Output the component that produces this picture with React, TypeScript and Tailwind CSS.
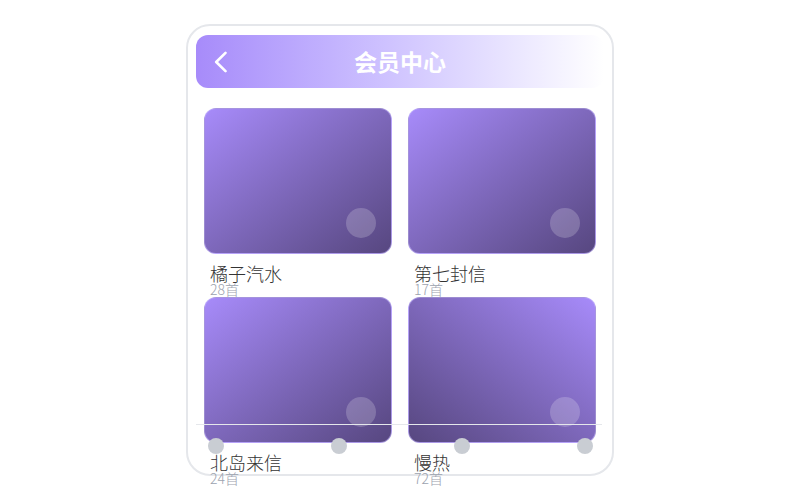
import { FC } from "react";

interface Album {
  title: string;
  count: number;
  flip?: boolean;
}

const albums: Album[] = [
  { title: "橘子汽水", count: 28 },
  { title: "第七封信", count: 17 },
  { title: "北岛来信", count: 24 },
  { title: "慢热", count: 72, flip: true },
];

const AlbumCard: FC<{ album: Album }> = ({ album }) => (
  <div className="h-[189px]">
    <div
      className={
        album.flip
          ? "relative h-[146px] rounded-xl border border-[#c4b5fd]/60 bg-linear-to-bl from-[#a78bfa] to-[#574780]"
          : "relative h-[146px] rounded-xl border border-[#c4b5fd]/60 bg-linear-to-br from-[#a78bfa] to-[#574780]"
      }
    >
      <div className="absolute right-[15px] bottom-[15px] size-[30px] rounded-full bg-white/20" />
    </div>
    <div className="px-1.5 pt-2.5 font-light">
      <p className="text-[18px] leading-none text-[#333]">{album.title}</p>
      <p className="text-sm leading-none text-[#9ca3af]">{album.count}首</p>
    </div>
  </div>
);

const App: FC = () => {
  return (
    <div className="min-h-[500px] bg-white pt-6 font-['Noto_Sans_CJK_SC','Noto_Sans',sans-serif]">
      <section className="relative mx-auto h-[452px] w-[428px] rounded-3xl border-2 border-[#e5e7eb] px-2 pt-[9px]">
        {/* Header */}
        <header className="relative flex h-[53px] items-center justify-center rounded-xl bg-linear-to-r from-[#a78bfa] to-white">
          <svg
            className="absolute left-[18px] top-[16px]"
            width="14"
            height="22"
            viewBox="0 0 14 22"
            fill="none"
          >
            <polyline
              points="11.5,1.8 2.2,11 11.5,20.2"
              stroke="white"
              strokeWidth="2.6"
              strokeLinecap="round"
              strokeLinejoin="round"
            />
          </svg>
          <h1 className="text-[23px] font-bold text-white">会员中心</h1>
        </header>

        {/* Albums */}
        <div className="grid grid-cols-2 gap-x-4 px-2 pt-5">
          {albums.map((album) => (
            <AlbumCard key={album.title} album={album} />
          ))}
        </div>

        {/* Track line */}
        <div className="absolute inset-x-0 top-[398px]">
          <div className="mr-[10px] ml-2 h-px bg-[#e5e7eb]" />
          <div className="mt-[13px] flex justify-between pr-[19px] pl-5">
            <span className="size-4 rounded-full bg-[#c9cdd3]" />
            <span className="size-4 rounded-full bg-[#c9cdd3]" />
            <span className="size-4 rounded-full bg-[#c9cdd3]" />
            <span className="size-4 rounded-full bg-[#c9cdd3]" />
          </div>
        </div>
      </section>
    </div>
  );
};

export default App;
